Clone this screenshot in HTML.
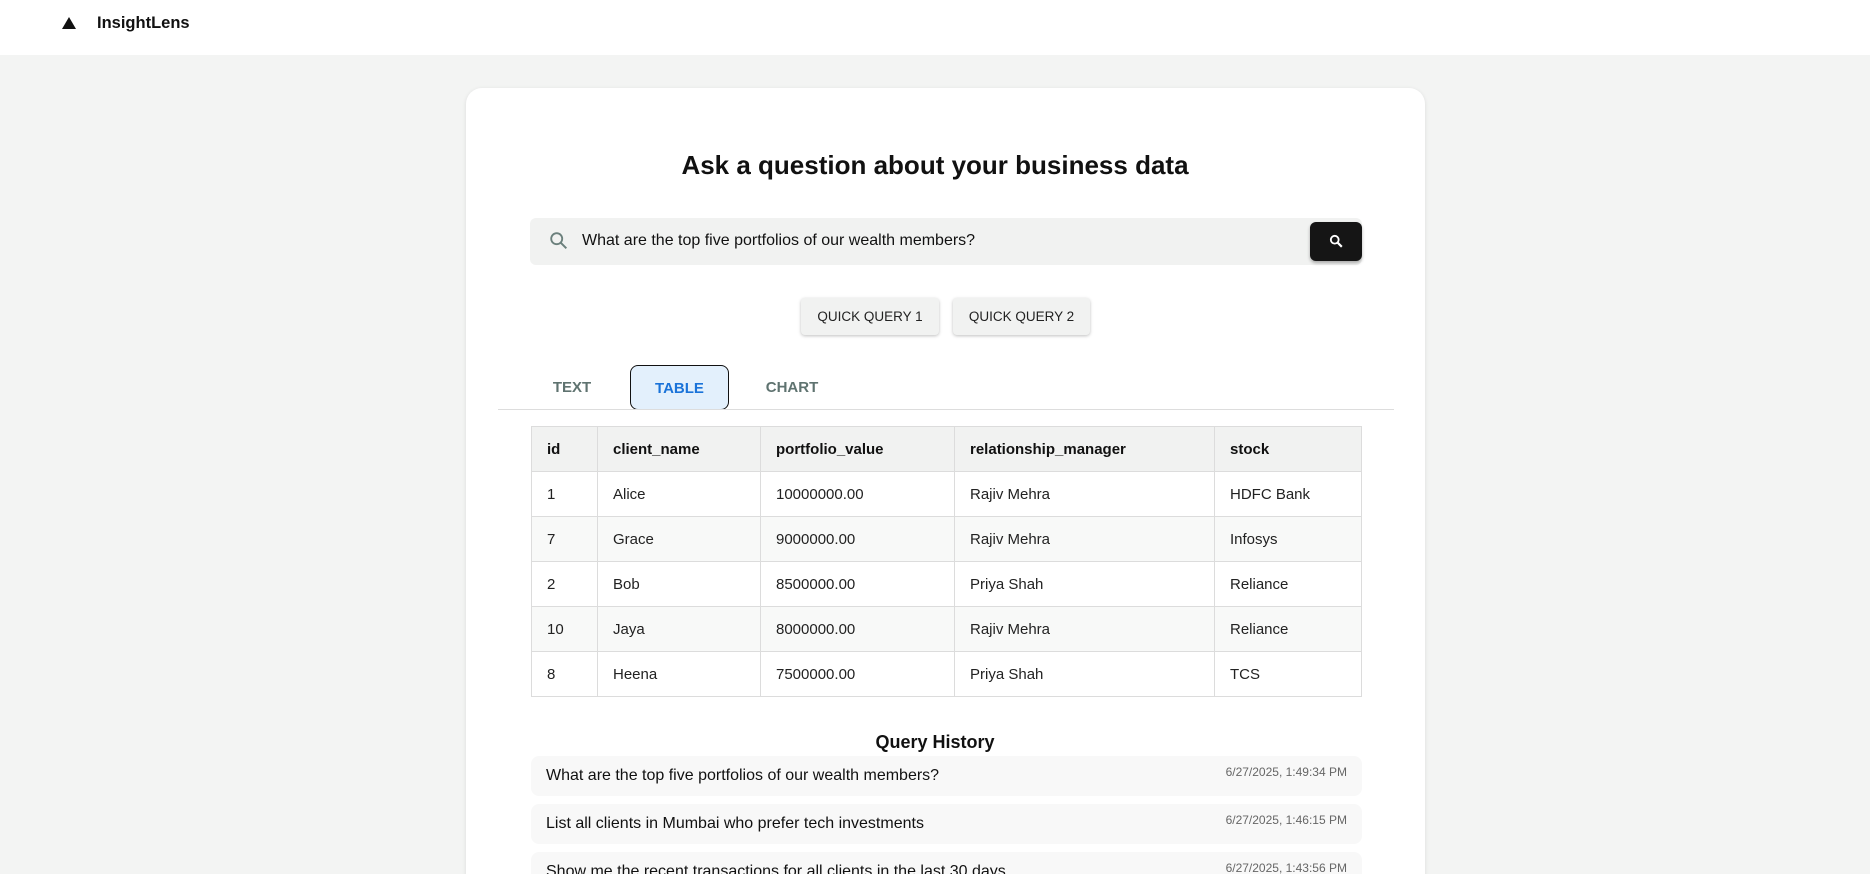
<!DOCTYPE html>
<html><head><meta charset="utf-8"><style>
*{box-sizing:border-box;margin:0;padding:0}
html,body{width:1870px;height:874px;overflow:hidden}
body{background:#f3f4f3;font-family:"Liberation Sans",sans-serif;color:#111}
#w{position:relative;width:1870px;height:874px;overflow:hidden}
.hdr{position:absolute;left:0;top:0;width:1870px;height:55px;background:#fff}
.tri{position:absolute;left:62px;top:17px;width:0;height:0;border-left:7px solid transparent;border-right:7px solid transparent;border-bottom:12px solid #111}
.brand{position:absolute;left:97px;top:14px;font-size:16.5px;font-weight:bold}
.card{position:absolute;left:466px;top:88px;width:959px;height:820px;background:#fff;border-radius:16px;box-shadow:0 1px 4px rgba(0,0,0,.1)}
h1{position:absolute;left:0;width:1870px;top:150px;text-align:center;font-size:26px;font-weight:bold}
.search{position:absolute;left:530px;top:218px;width:832px;height:47px;background:#f1f2f1;border-radius:6px}
.search .t{position:absolute;left:52px;top:14px;font-size:16px}
.sbtn{position:absolute;left:1310px;top:222px;width:52px;height:39px;background:#151515;border-radius:6px;box-shadow:0 2px 3px rgba(0,0,0,.3)}
.qq{position:absolute;top:298px;height:37px;background:#f1f2f1;border-radius:4px;box-shadow:0 1px 3px rgba(0,0,0,.25);font-size:13.5px;text-align:center;line-height:37px;color:#222}
.tab{position:absolute;top:365px;height:45px;line-height:45px;font-size:15px;font-weight:bold;color:#5f7370;text-align:center}
.sel{left:630px;width:99px;background:#e3f0fc;border:1.5px solid #111;border-radius:8px;color:#1a73d9}
.div{position:absolute;left:498px;top:409px;width:896px;height:1px;background:#ddd}
table{position:absolute;left:531px;top:426px;width:831px;border-collapse:collapse;font-size:15px}
td,th{border:1px solid #dcdcdc;height:45px;padding:0 15px;text-align:left;color:#222}
th{background:#f1f2f1;font-weight:bold;color:#111}
tr:nth-child(odd) td{background:#f8f9f8}
h2{position:absolute;left:0;width:1870px;top:732px;text-align:center;font-size:18px;font-weight:bold}
.h{position:absolute;left:531px;width:831px;height:40px;background:#f8f8f8;border-radius:8px}
.h .q{position:absolute;left:15px;top:11px;font-size:16px}
.h .d{position:absolute;right:15px;top:9px;font-size:12px;color:#666}
</style></head><body><div id="w">
<div class="hdr"><div class="tri"></div><div class="brand">InsightLens</div></div>
<div class="card"></div>
<h1>Ask a question about your business data</h1>
<div class="search"><svg style="position:absolute;left:18px;top:12px" width="22" height="22" viewBox="0 0 24 24"><circle cx="9.5" cy="9.5" r="6" fill="none" stroke="#6b807c" stroke-width="2"/><path d="M14 14l6 6" stroke="#6b807c" stroke-width="2.2"/></svg><div class="t">What are the top five portfolios of our wealth members?</div></div>
<div class="sbtn"><svg style="position:absolute;left:18px;top:11px" width="17" height="17" viewBox="0 0 24 24"><circle cx="9.5" cy="9.5" r="5.5" fill="none" stroke="#fff" stroke-width="2.6"/><path d="M13.5 13.5l6 6" stroke="#fff" stroke-width="3"/></svg></div>
<div class="qq" style="left:801px;width:138px">QUICK QUERY 1</div>
<div class="qq" style="left:953px;width:137px">QUICK QUERY 2</div>
<div class="tab" style="left:532px;width:80px">TEXT</div>
<div class="tab sel">TABLE</div>
<div class="tab" style="left:752px;width:80px">CHART</div>
<div class="div"></div>
<table>
<tr><th style="width:66px">id</th><th style="width:163px">client_name</th><th style="width:194px">portfolio_value</th><th style="width:260px">relationship_manager</th><th>stock</th></tr>
<tr><td>1</td><td>Alice</td><td>10000000.00</td><td>Rajiv Mehra</td><td>HDFC Bank</td></tr>
<tr><td>7</td><td>Grace</td><td>9000000.00</td><td>Rajiv Mehra</td><td>Infosys</td></tr>
<tr><td>2</td><td>Bob</td><td>8500000.00</td><td>Priya Shah</td><td>Reliance</td></tr>
<tr><td>10</td><td>Jaya</td><td>8000000.00</td><td>Rajiv Mehra</td><td>Reliance</td></tr>
<tr><td>8</td><td>Heena</td><td>7500000.00</td><td>Priya Shah</td><td>TCS</td></tr>
</table>
<h2>Query History</h2>
<div class="h" style="top:756px"><div class="q">What are the top five portfolios of our wealth members?</div><div class="d">6/27/2025, 1:49:34 PM</div></div>
<div class="h" style="top:804px"><div class="q">List all clients in Mumbai who prefer tech investments</div><div class="d">6/27/2025, 1:46:15 PM</div></div>
<div class="h" style="top:852px"><div class="q">Show me the recent transactions for all clients in the last 30 days</div><div class="d">6/27/2025, 1:43:56 PM</div></div>
</div></body></html>
